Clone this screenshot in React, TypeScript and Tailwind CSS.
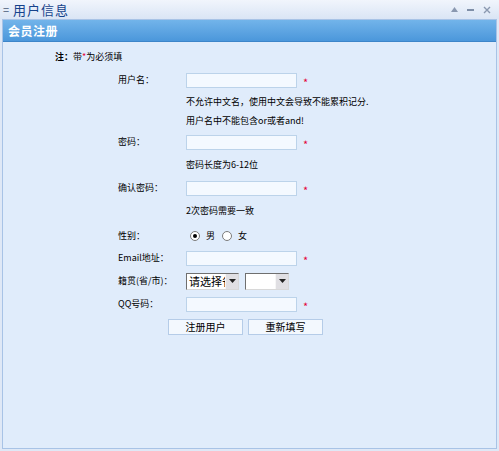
export default function App() {
  const rowPad = 'pl-[115px]';
  const hintPad = 'pl-[183px]';

  const Star = () => <span className="ml-[6px] mt-[4px] text-[#e4003a] text-[11px] leading-none">*</span>;

  const TextInput = () => (
    <div className="w-[111px] h-[15px] bg-[#f4f9ff] border border-[#bcd3ea]" />
  );

  const Select = ({ w, text }: { w: string; text?: string }) => (
    <div className={`${w} h-[17px] bg-white border border-t-[#6f6f6f] border-l-[#6f6f6f] border-r-[#d8d8d8] border-b-[#d8d8d8] flex items-stretch overflow-hidden`}>
      <div className="flex-1 min-w-0 overflow-hidden whitespace-nowrap pl-[2px] text-[11px] leading-[15px]">{text}</div>
      <div className="w-[13px] shrink-0 bg-[#e0dfe3] border-l border-[#f6f6f6] flex items-center justify-center">
        <svg width="7" height="4" viewBox="0 0 7 4">
          <path d="M0 0h7L3.5 4z" fill="#222" />
        </svg>
      </div>
    </div>
  );

  const Radio = ({ checked }: { checked?: boolean }) => (
    <span className="w-[10px] h-[10px] rounded-full border border-[#7b7b7b] bg-white flex items-center justify-center">
      {checked && <span className="w-[4px] h-[4px] rounded-full bg-black" />}
    </span>
  );

  return (
    <div className="w-[499px] h-[451px] bg-[#dfe8f6] font-['SimSun','Noto_Sans_CJK_SC',sans-serif] text-[9px] text-black flex flex-col">
      {/* title bar */}
      <div className="h-[19px] bg-gradient-to-b from-[#f1f5fc] to-[#dae5f5] flex items-center px-[3px] shrink-0">
        <span className="text-[#4b5d78] text-[11px] mr-[4px]">=</span>
        <span className="text-[#15428b] text-[13px] tracking-[1px]">用户信息</span>
        <div className="ml-auto flex items-center gap-[9px] pr-[5px] text-[#7f8fa8]">
          <svg width="7" height="5" viewBox="0 0 7 5"><path d="M0 5L3.5 0L7 5z" fill="#8a98b0" /></svg>
          <svg width="7" height="7" viewBox="0 0 7 7"><path d="M0 4h7" stroke="#5d6f8c" strokeWidth="1.5" /></svg>
          <svg width="8" height="8" viewBox="0 0 8 8"><path d="M1 1L7 7M7 1L1 7" stroke="#8a98b0" strokeWidth="1.4" /></svg>
        </div>
      </div>

      {/* panel */}
      <div className="flex-1 mx-[2px] mb-[2px] border border-[#a8c3e6] flex flex-col">
        <div className="h-[22px] bg-gradient-to-b from-[#72b4ea] to-[#4b97db] border-b border-[#3d85c9] flex items-center pl-[5px] shrink-0">
          <span className="text-white text-[12px] font-bold tracking-[0.5px]">会员注册</span>
        </div>

        <div className="flex-1 bg-[#e0ecfb] flex flex-col pt-[5px]">
          <div className="h-[20px] flex items-center pl-[52px]">
            <span className="font-bold">注：</span>带<span className="text-[#e4003a]">*</span>为必须填
          </div>

          <div className={`h-[26px] flex items-center ${rowPad}`}>
            <span className="w-[68px]">用户名：</span>
            <TextInput />
            <Star />
          </div>
          <div className={`h-[18px] flex items-center ${hintPad}`}>不允许中文名，使用中文会导致不能累积记分.</div>
          <div className={`h-[20px] flex items-center ${hintPad}`}>用户名中不能包含or或者and!</div>

          <div className={`h-[22px] flex items-center ${rowPad}`}>
            <span className="w-[68px]">密码：</span>
            <TextInput />
            <Star />
          </div>
          <div className={`h-[24px] flex items-center ${hintPad}`}>密码长度为6-12位</div>

          <div className={`h-[22px] flex items-center ${rowPad}`}>
            <span className="w-[68px]">确认密码：</span>
            <TextInput />
            <Star />
          </div>
          <div className={`h-[24px] flex items-center ${hintPad}`}>2次密码需要一致</div>

          <div className={`h-[26px] flex items-center ${rowPad}`}>
            <span className="w-[72px]">性别：</span>
            <Radio checked />
            <span className="ml-[6px] mr-[7px]">男</span>
            <Radio />
            <span className="ml-[6px]">女</span>
          </div>

          <div className={`h-[18px] flex items-center ${rowPad}`}>
            <span className="w-[68px]">Email地址：</span>
            <TextInput />
            <Star />
          </div>

          <div className={`h-[28px] flex items-center ${rowPad}`}>
            <span className="w-[68px]">籍贯(省/市)：</span>
            <Select w="w-[53px]" text="请选择省" />
            <div className="w-[6px]" />
            <Select w="w-[44px]" />
          </div>

          <div className={`h-[18px] flex items-center ${rowPad}`}>
            <span className="w-[68px]">QQ号码：</span>
            <TextInput />
            <Star />
          </div>

          <div className="h-[28px] flex items-center pl-[165px] gap-[5px]">
            <button className="w-[75px] h-[16px] bg-[#f3f8fe] border border-[#b5cce8] text-[10px] leading-none flex items-center justify-center">注册用户</button>
            <button className="w-[75px] h-[16px] bg-[#f3f8fe] border border-[#b5cce8] text-[10px] leading-none flex items-center justify-center">重新填写</button>
          </div>
        </div>
      </div>
    </div>
  );
}
